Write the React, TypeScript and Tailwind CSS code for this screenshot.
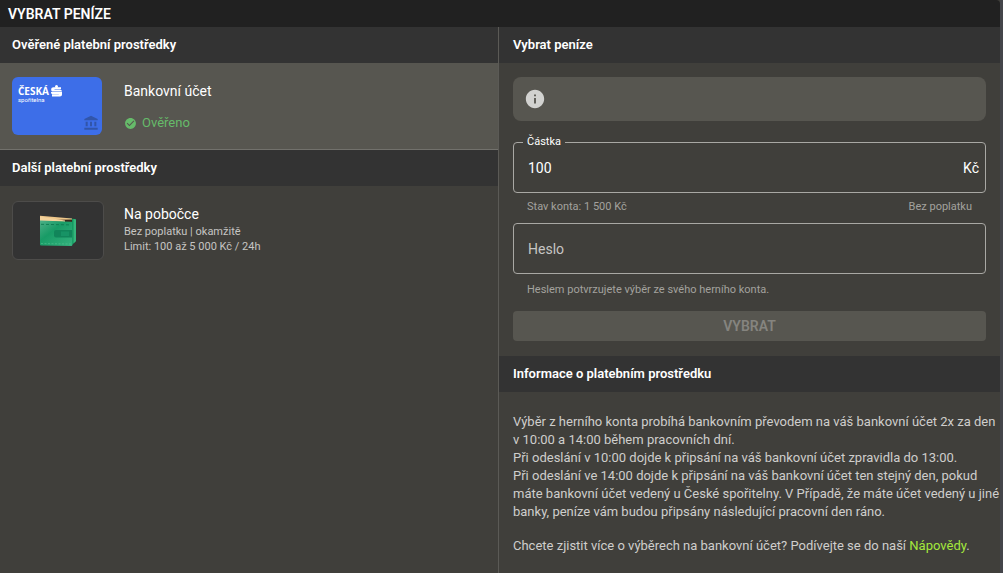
import React, { useState } from 'react';
import { MdAccountBalance, MdCheckCircle, MdInfo } from 'react-icons/md';

interface SectionTitleProps {
  children: React.ReactNode;
  className?: string;
}

const SectionTitle: React.FC<SectionTitleProps> = ({ children, className = 'px-3' }) => (
  <h2 className={`flex h-9 items-center bg-[#333333] text-[13px] font-semibold text-white ${className}`}>
    {children}
  </h2>
);

const SporitelnaCard: React.FC = () => (
  <div className="flex h-[58px] w-[90px] shrink-0 flex-col justify-between rounded-md bg-[#3d6ee8]">
    <div className="px-[6px] pt-2 text-white">
      <div className="flex items-center gap-[2px]">
        <span className="font-['Open_Sans','Noto_Sans',sans-serif] text-[10px] leading-3 font-bold">ČESKÁ</span>
        <svg className="h-3 w-[11px]" viewBox="0 0 11 12" fill="currentColor" aria-hidden="true">
          <circle cx="5.5" cy="1.5" r="1.5" />
          <path d="M2.5 2.300H10V4.300H3.500v.4H9c1.200 0 2 .7 2 1.900H2C.8 6.600.2 5.900.2 4.700v-.4c0-1.200.9-2 2.300-2z" />
          <path d="M0 7.100h11v2.500c0 1.200-.8 1.900-2 1.900H1V9.600h6.800v-.4H2c-1.200 0-2-.7-2-1.800z" />
        </svg>
      </div>
      <div className="text-[6px] leading-[6px]">spořitelna</div>
    </div>
    <MdAccountBalance className="mr-[3px] mb-1 h-4 w-4 self-end text-[#3155aa]" />
  </div>
);

const WalletCard: React.FC = () => (
  <div className="flex h-[59px] w-[92px] shrink-0 items-center justify-center rounded-md border border-[#4d4c4a] bg-[#333333]">
    <svg className="h-8 w-[38px]" viewBox="0 0 38 32" aria-hidden="true">
      <defs>
        <linearGradient id="walletFront" x1="0" y1="0" x2="1" y2="1">
          <stop offset="0" stopColor="#4fb088" />
          <stop offset="0.4" stopColor="#189b66" />
          <stop offset="1" stopColor="#35b27e" />
        </linearGradient>
      </defs>
      <path d="M30 3.500l6 .5q1 .2 1 1.400V26l-4 4H24V4z" fill="#12935c" />
      <path d="M34.500 4l2.500.6V26l-2.500 2.500z" fill="#35b57c" />
      <path d="M1 .8l32 2.800V8H1z" fill="#edc68a" />
      <path d="M10 5l23-.4V8H10z" fill="#3b271b" />
      <path d="M1 1.600L26 5.500v1.400L1 6z" fill="#f3d19b" />
      <path d="M1 5.500l31.500 1.300q.8 0 .8 1V30q0 1-1 1L2 30.500q-1 0-1-1z" fill="url(#walletFront)" />
      <path d="M2 9.300l30 .6" stroke="#0f7b50" strokeWidth="0.9" strokeDasharray="3 2" fill="none" />
      <path d="M2 28.500l30 .5" stroke="#5cc797" strokeWidth="0.5" strokeDasharray="2 1.500" fill="none" />
      <path d="M17 15h16v7.500H17q-2 0-2-2V17q0-2 2-2z" fill="#11855a" />
      <path d="M22 16.500h8v4.500h-8z" fill="#179365" />
    </svg>
  </div>
);

const App: React.FC = () => {
  const [amount, setAmount] = useState('100');
  const [password, setPassword] = useState('');

  return (
    <div className="min-h-screen bg-[#44454a] pr-[3px] font-[Roboto,sans-serif]">
      <div className="flex min-h-screen flex-col bg-[#403f3b]">
        <header className="flex h-[27px] items-center rounded-tr-sm bg-[#212121] px-2">
          <h1 className="text-sm font-semibold text-white">VYBRAT PENÍZE</h1>
        </header>

        <main className="grid flex-1 grid-cols-[499fr_501fr]">
          <section className="border-r border-[#5b5a56]">
            <SectionTitle>Ověřené platební prostředky</SectionTitle>
            <button
              type="button"
              className="flex w-full gap-[22px] border-b border-[#72716c] bg-[#575650] px-3 py-[14px] text-left"
            >
              <SporitelnaCard />
              <span className="flex flex-col gap-3 pt-1">
                <span className="text-sm text-white">Bankovní účet</span>
                <span className="flex items-center gap-[5px] text-[13px] leading-5 text-[#66bb6a]">
                  <MdCheckCircle className="h-[13px] w-[13px]" />
                  Ověřeno
                </span>
              </span>
            </button>

            <SectionTitle>Další platební prostředky</SectionTitle>
            <button type="button" className="flex w-full gap-5 px-3 py-[15px] text-left">
              <WalletCard />
              <span className="flex flex-col pt-[3px] text-[11px] leading-[15px] text-[#c6c5c3]">
                <span className="text-sm text-white">Na pobočce</span>
                <span>Bez poplatku | okamžitě</span>
                <span>Limit: 100 až 5 000 Kč / 24h</span>
              </span>
            </button>
          </section>

          <section>
            <SectionTitle className="px-[14px]">Vybrat peníze</SectionTitle>
            <form className="px-[14px] pt-[14px] pb-[15px]" onSubmit={(e) => e.preventDefault()}>
              <div className="flex h-11 items-center rounded-lg bg-[#575650] px-[11px]">
                <MdInfo className="h-[22px] w-[22px] text-[#d2d2d0]" />
              </div>

              <fieldset className="mt-[14px] rounded-sm border border-[#a9a8a4] pb-[6px]">
                <legend className="ml-[9px] px-1 text-[11px] leading-[14px] text-white">
                  <label htmlFor="amount">Částka</label>
                </legend>
                <div className="flex h-[37px] items-center pr-[6px] pl-[14px] text-sm text-white">
                  <input
                    id="amount"
                    type="text"
                    inputMode="numeric"
                    value={amount}
                    onChange={(e) => setAmount(e.target.value)}
                    className="min-w-0 flex-1 bg-transparent outline-none"
                  />
                  <span>Kč</span>
                </div>
              </fieldset>
              <div className="flex h-[30px] items-center justify-between px-[14px] pb-[2px] text-[11px] text-[#a3a29e]">
                <span>Stav konta: 1 500 Kč</span>
                <span>Bez poplatku</span>
              </div>

              <input
                type="password"
                aria-label="Heslo"
                placeholder="Heslo"
                value={password}
                onChange={(e) => setPassword(e.target.value)}
                className="block h-[51px] w-full rounded-sm border border-[#a9a8a4] bg-transparent px-[14px] text-sm text-white outline-none placeholder:text-[#c6c5c3]"
              />
              <p className="flex h-[37px] items-center px-[14px] pb-[5px] text-[11px] text-[#a3a29e]">
                Heslem potvrzujete výběr ze svého herního konta.
              </p>

              <button
                type="submit"
                disabled
                className="block h-[30px] w-full rounded-sm bg-[#575650] text-sm font-semibold text-[#85847f]"
              >
                VYBRAT
              </button>
            </form>

            <SectionTitle className="px-[14px]">Informace o platebním prostředku</SectionTitle>
            <div className="pt-[21px] pb-5 pl-[14px] text-[13px] leading-[18px] text-[#cfcecc]">
              <p>
                Výběr z herního konta probíhá bankovním převodem na váš bankovní účet 2x za den v 10:00 a
                14:00 během pracovních dní.
              </p>
              <p>Při odeslání v 10:00 dojde k připsání na váš bankovní účet zpravidla do 13:00.</p>
              <p>
                Při odeslání ve 14:00 dojde k připsání na váš bankovní účet ten stejný den, pokud máte
                bankovní účet vedený u České spořitelny. V Případě, že máte účet vedený u jiné banky, peníze
                vám budou připsány následující pracovní den ráno.
              </p>
              <p className="mt-4">
                Chcete zjistit více o výběrech na bankovní účet? Podívejte se do naší{' '}
                <a href="#napoveda" className="text-[#a4e83c]">
                  Nápovědy
                </a>
                .
              </p>
            </div>
          </section>
        </main>
      </div>
    </div>
  );
};

export default App;
